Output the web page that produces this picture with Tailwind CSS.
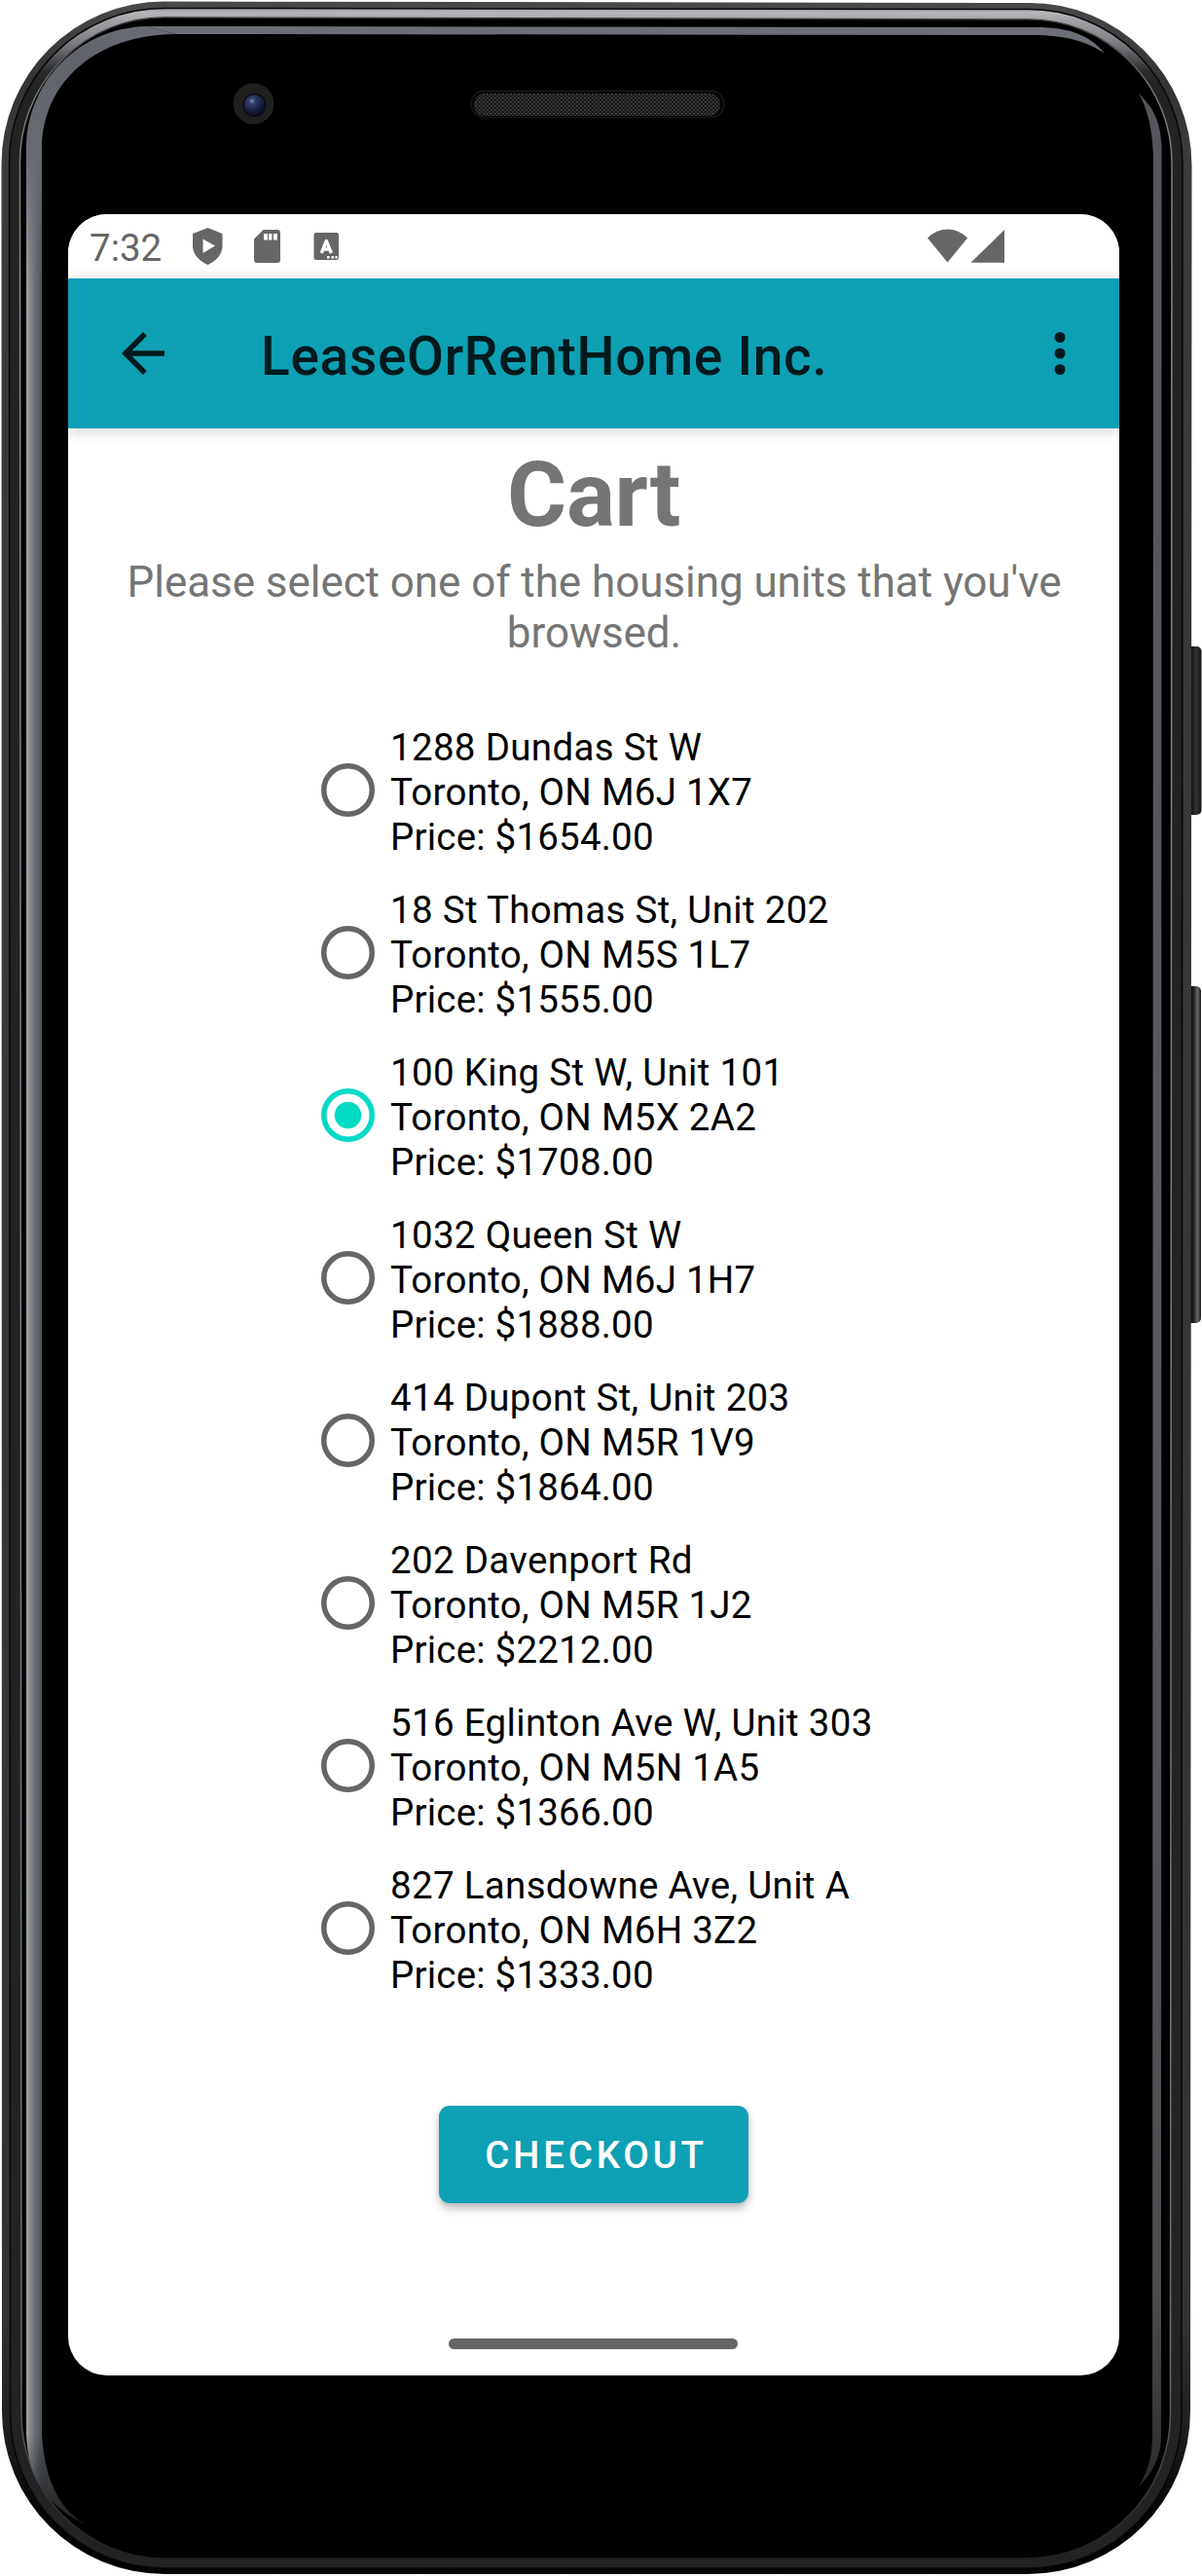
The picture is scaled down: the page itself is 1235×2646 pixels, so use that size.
<!DOCTYPE html>
<html lang="en">
<head>
<meta charset="utf-8">
<title>LeaseOrRentHome Inc.</title>
<script src="https://cdn.jsdelivr.net/npm/@tailwindcss/browser@4"></script>
</head>
<body class="bg-white font-['Roboto',sans-serif]">
<div class="relative w-[1235px] h-[2646px] overflow-hidden pt-[220px] pl-[70px]">

  <!-- Phone body -->
  <svg class="absolute inset-0" width="1235" height="2646" viewBox="0 0 1235 2646" fill="none">
    <defs>
      <linearGradient id="outer" x1="0" y1="0" x2="0" y2="2646" gradientUnits="userSpaceOnUse">
        <stop offset="0" stop-color="#4a4a4a"/><stop offset=".03" stop-color="#333"/><stop offset=".06" stop-color="#3d3a3b"/><stop offset=".9" stop-color="#353132"/><stop offset=".95" stop-color="#1c1a1b"/><stop offset=".975" stop-color="#050505"/><stop offset="1" stop-color="#000"/>
      </linearGradient>
      <linearGradient id="metal" x1="0" y1="8" x2="0" y2="90" gradientUnits="userSpaceOnUse">
        <stop offset="0" stop-color="#9a9c9f"/><stop offset=".06" stop-color="#b4b6ba"/><stop offset=".15" stop-color="#a2a4a8"/><stop offset=".45" stop-color="#7b7d81"/><stop offset=".8" stop-color="#2a2b2d"/><stop offset="1" stop-color="#222323"/>
      </linearGradient>
      <linearGradient id="hair" x1="0" y1="18" x2="0" y2="2640" gradientUnits="userSpaceOnUse">
        <stop offset="0" stop-color="#333"/><stop offset=".03" stop-color="#777"/><stop offset=".1" stop-color="#8a8a8c"/><stop offset=".92" stop-color="#6e6e70"/><stop offset=".97" stop-color="#3a3a3a"/><stop offset="1" stop-color="#1c1c1c"/>
      </linearGradient>
      <linearGradient id="glassL" x1="27" y1="0" x2="43" y2="0" gradientUnits="userSpaceOnUse">
        <stop offset="0" stop-color="#a0a3a7"/><stop offset=".25" stop-color="#84878c"/><stop offset=".6" stop-color="#666a70"/><stop offset="1" stop-color="#4e5157"/>
      </linearGradient>
      <linearGradient id="seamTL" x1="0" y1="150" x2="0" y2="300" gradientUnits="userSpaceOnUse">
        <stop offset="0" stop-color="#676b71"/><stop offset="1" stop-color="#676b71" stop-opacity="0"/>
      </linearGradient>
      <linearGradient id="cornerTL" x1="30" y1="150" x2="175" y2="30" gradientUnits="userSpaceOnUse">
        <stop offset="0" stop-color="#676b71"/><stop offset=".5" stop-color="#606269"/><stop offset="1" stop-color="#6c6f77"/>
      </linearGradient>
      <linearGradient id="fadeBL" x1="0" y1="2500" x2="0" y2="2592" gradientUnits="userSpaceOnUse">
        <stop offset="0" stop-color="#000" stop-opacity="0"/><stop offset="1" stop-color="#000" stop-opacity=".6"/>
      </linearGradient>
      <linearGradient id="glassR" x1="0" y1="96" x2="0" y2="2554" gradientUnits="userSpaceOnUse">
        <stop offset="0" stop-color="#55555c"/><stop offset=".5" stop-color="#5a5b61"/><stop offset=".92" stop-color="#4c4d50"/><stop offset="1" stop-color="#2a2b2d"/>
      </linearGradient>
      <linearGradient id="key" x1="1223" y1="0" x2="1235" y2="0" gradientUnits="userSpaceOnUse">
        <stop offset="0" stop-color="#0c0c0c"/><stop offset=".3" stop-color="#222"/><stop offset=".6" stop-color="#666"/><stop offset=".8" stop-color="#3a3a3a"/><stop offset="1" stop-color="#0e0e0e"/>
      </linearGradient>
      <linearGradient id="keyDark" x1="1223" y1="0" x2="1235" y2="0" gradientUnits="userSpaceOnUse">
        <stop offset="0" stop-color="#0c0c0c"/><stop offset=".5" stop-color="#333"/><stop offset="1" stop-color="#111"/>
      </linearGradient>
      <radialGradient id="lens" cx=".38" cy=".3" r=".7">
        <stop offset="0" stop-color="#8790b8"/><stop offset=".2" stop-color="#34406f"/><stop offset=".6" stop-color="#1a2448"/><stop offset="1" stop-color="#0b1026"/>
      </radialGradient>
      <pattern id="mesh" width="4" height="4" patternUnits="userSpaceOnUse">
        <rect width="4" height="4" fill="#161717"/><rect width="1.6" height="1.6" fill="#4c4e4e"/><rect x="2" y="2" width="1.6" height="1.6" fill="#404242"/>
      </pattern>
    </defs>
    <rect x="1218" y="664" width="16.5" height="173" rx="5" fill="url(#keyDark)"/>
    <rect x="1218" y="1013" width="16" height="346" rx="5" fill="url(#key)"/>
    <path d="M1.500 169A167 167 0 0 1 168.500 1.500L1057 3A167 167 0 0 1 1224.500 170L1223 2477A167 167 0 0 1 1056 2644H169A167 167 0 0 1 2 2477Z" fill="url(#outer)"/>
    <path d="M9.500 169A159 159 0 0 1 168.500 8.500L1057 9.500A158 158 0 0 1 1215 169L1214 2477A158 158 0 0 1 1056 2638H169A159 159 0 0 1 10.500 2477Z" fill="url(#metal)" stroke="#080808" stroke-width="1.500"/>
    <path d="M20.500 169A148 148 0 0 1 168.500 18L1057 20A147 147 0 0 1 1204 169L1202.500 2477A148 148 0 0 1 1056 2628H169A148 148 0 0 1 22 2477Z" fill="#000" stroke="url(#hair)" stroke-width="1.500"/>
    <path d="M27 150C29 82 82 29 150 27L180 35C98 36 45 84 43 150Z" fill="url(#cornerTL)"/>
    <path d="M27 150H43V2500C46 2548 60 2576 87 2593C48 2572 29 2548 27 2500Z" fill="url(#glassL)"/>
    <rect x="27" y="150" width="16" height="150" fill="url(#seamTL)"/>
    <path d="M27 2500H43C46 2548 60 2576 87 2593C48 2572 29 2548 27 2500Z" fill="url(#fadeBL)"/>
    <path d="M150 27L1065 28C1098 28 1120 36 1135 55C1118 43 1095 36 1060 36L180 35Z" fill="#6c6f77"/>
    <path d="M1170 96C1184 110 1192 122 1193.500 150L1193 2505C1192 2527 1182 2542 1170 2554C1180 2538 1184 2522 1184 2500L1185 160C1184 130 1178 110 1170 96Z" fill="url(#glassR)"/>
    <circle cx="260.500" cy="106.500" r="21" fill="#202020"/>
    <circle cx="261.500" cy="108" r="12" fill="#08080c"/>
    <circle cx="261.500" cy="108" r="10.800" fill="url(#lens)"/>
    <rect x="484" y="93.500" width="260" height="27" rx="13.500" fill="#050505" stroke="#18181b" stroke-width="1.500"/>
    <rect x="487" y="96" width="253" height="23" rx="11" fill="url(#mesh)"/>
  </svg>

  <!-- Display -->
  <main class="relative w-[1080px] h-[2220px] bg-white rounded-[40px] overflow-hidden flex flex-col">
    <div class="h-[66px] shrink-0 flex justify-between bg-white text-[#666]">
      <div class="flex pl-[22px]">
        <span class="w-[105px] text-[38.5px] leading-[46px] pt-[12px]">7:32</span>
        <svg width="160" height="66" viewBox="197 220 160 66" fill="#666">
          <path fill-rule="evenodd" d="M213.500 234L228.500 240V253C228.500 261 222 268.500 213.500 272C205 268.500 198 261 198 253V240ZM208.500 245.500V260L221 252.500Z"/>
          <path fill-rule="evenodd" d="M270.500 236H285Q288 236 288 239V267Q288 270 285 270H264Q261 270 261 267V245.500ZM271 240V246.500H275V240ZM276 240V246.500H279.500V240ZM281 240V246.500H285V240Z"/>
          <rect x="322.500" y="239" width="25.500" height="28" rx="2.500"/>
          <path d="M330.300 260L335.300 247.500L340.400 260M332 256H338.500" stroke="#fff" stroke-width="3.400" stroke-linejoin="round" fill="none"/>
          <path d="M336 263h2.500v2.500H336zM340.500 263h2.500v2.500h-2.500zM344.500 263h2.200v2.500h-2.200z" fill="#fff"/>
        </svg>
      </div>
      <svg class="mr-[110px]" width="90" height="66" viewBox="950 220 90 66" fill="#666">
        <path d="M953 244.500Q962 235.500 973.500 235.500T994 244.500L973.500 269.500Z"/>
        <path d="M1032 236V269.700H997.500Z"/>
      </svg>
    </div>

    <header class="relative h-[154px] shrink-0 flex items-center bg-[#0ea0b4] text-[#01191c] pr-[28px] shadow-[0_2px_14px_rgba(0,0,0,0.2)]">
      <svg class="ml-[44px]" width="66" height="66" viewBox="0 0 24 24" fill="currentColor"><path d="M20 11H7.830l5.590-5.590L12 4l-8 8 8 8 1.410-1.410L7.830 13H20v-2z"/></svg>
      <h1 class="ml-[88px] mt-[6px] flex-1 text-[55px] leading-[64px] font-medium tracking-[0.7px] whitespace-nowrap">LeaseOrRentHome Inc.</h1>
      <svg width="66" height="66" viewBox="0 0 24 24" fill="currentColor"><circle cx="12" cy="6" r="2"/><circle cx="12" cy="12" r="2"/><circle cx="12" cy="18" r="2"/></svg>
    </header>

    <section class="flex flex-col items-center pt-[13px]">
      <h2 class="text-[93.5px] leading-[110px] font-bold text-[#757575] tracking-[-0.4px]">Cart</h2>
      <p class="mt-[9px] w-[990px] text-center text-[44px] leading-[52px] text-[#757575] tracking-[-0.06px] pl-px">Please select one of the housing units that you've browsed.</p>
      <ul id="units" class="mt-[69px] w-full pl-[259.5px] flex flex-col gap-[29px]"></ul>
      <button class="mt-[111px] w-[318px] h-[100px] rounded-[11px] bg-[#0ea0b4] text-white text-[38.5px] leading-[46px] font-medium tracking-[3.8px] pl-[5px] pt-[2px] shadow-[0_6px_8px_rgba(0,0,0,0.22),0_1px_5px_rgba(0,0,0,0.12)]">CHECKOUT</button>
    </section>

    <div class="mt-auto mb-[27px] ml-[391px] w-[297px] h-[11.5px] rounded-full bg-[#666]"></div>
  </main>
</div>
<script>
const units = [
  ["1288 Dundas St W", "Toronto, ON M6J 1X7", "1654.00"],
  ["18 St Thomas St, Unit 202", "Toronto, ON M5S 1L7", "1555.00"],
  ["100 King St W, Unit 101", "Toronto, ON M5X 2A2", "1708.00", true],
  ["1032 Queen St W", "Toronto, ON M6J 1H7", "1888.00"],
  ["414 Dupont St, Unit 203", "Toronto, ON M5R 1V9", "1864.00"],
  ["202 Davenport Rd", "Toronto, ON M5R 1J2", "2212.00"],
  ["516 Eglinton Ave W, Unit 303", "Toronto, ON M5N 1A5", "1366.00"],
  ["827 Lansdowne Ave, Unit A", "Toronto, ON M6H 3Z2", "1333.00"],
];
document.getElementById("units").innerHTML = units.map(([street, city, price, on]) => `
  <li class="flex items-center gap-[16.5px] h-[138px]">
    <svg class="mb-[6px] shrink-0 ${on ? "text-[#03dac5]" : "text-[#666]"}" width="55" height="55" viewBox="0 0 20 20">
      <circle cx="10" cy="10" r="9" fill="none" stroke="currentColor" stroke-width="2"/>
      ${on ? '<circle cx="10" cy="10" r="5" fill="currentColor"/>' : ""}
    </svg>
    <span class="text-[38.5px] leading-[46px] text-black whitespace-nowrap"><span class="tracking-[0.32px]">${street}</span><br><span class="tracking-[0.26px]">${city}</span><br><span class="tracking-[0.2px]">Price: $${price}</span></span>
  </li>`).join("");
</script>
</body>
</html>
